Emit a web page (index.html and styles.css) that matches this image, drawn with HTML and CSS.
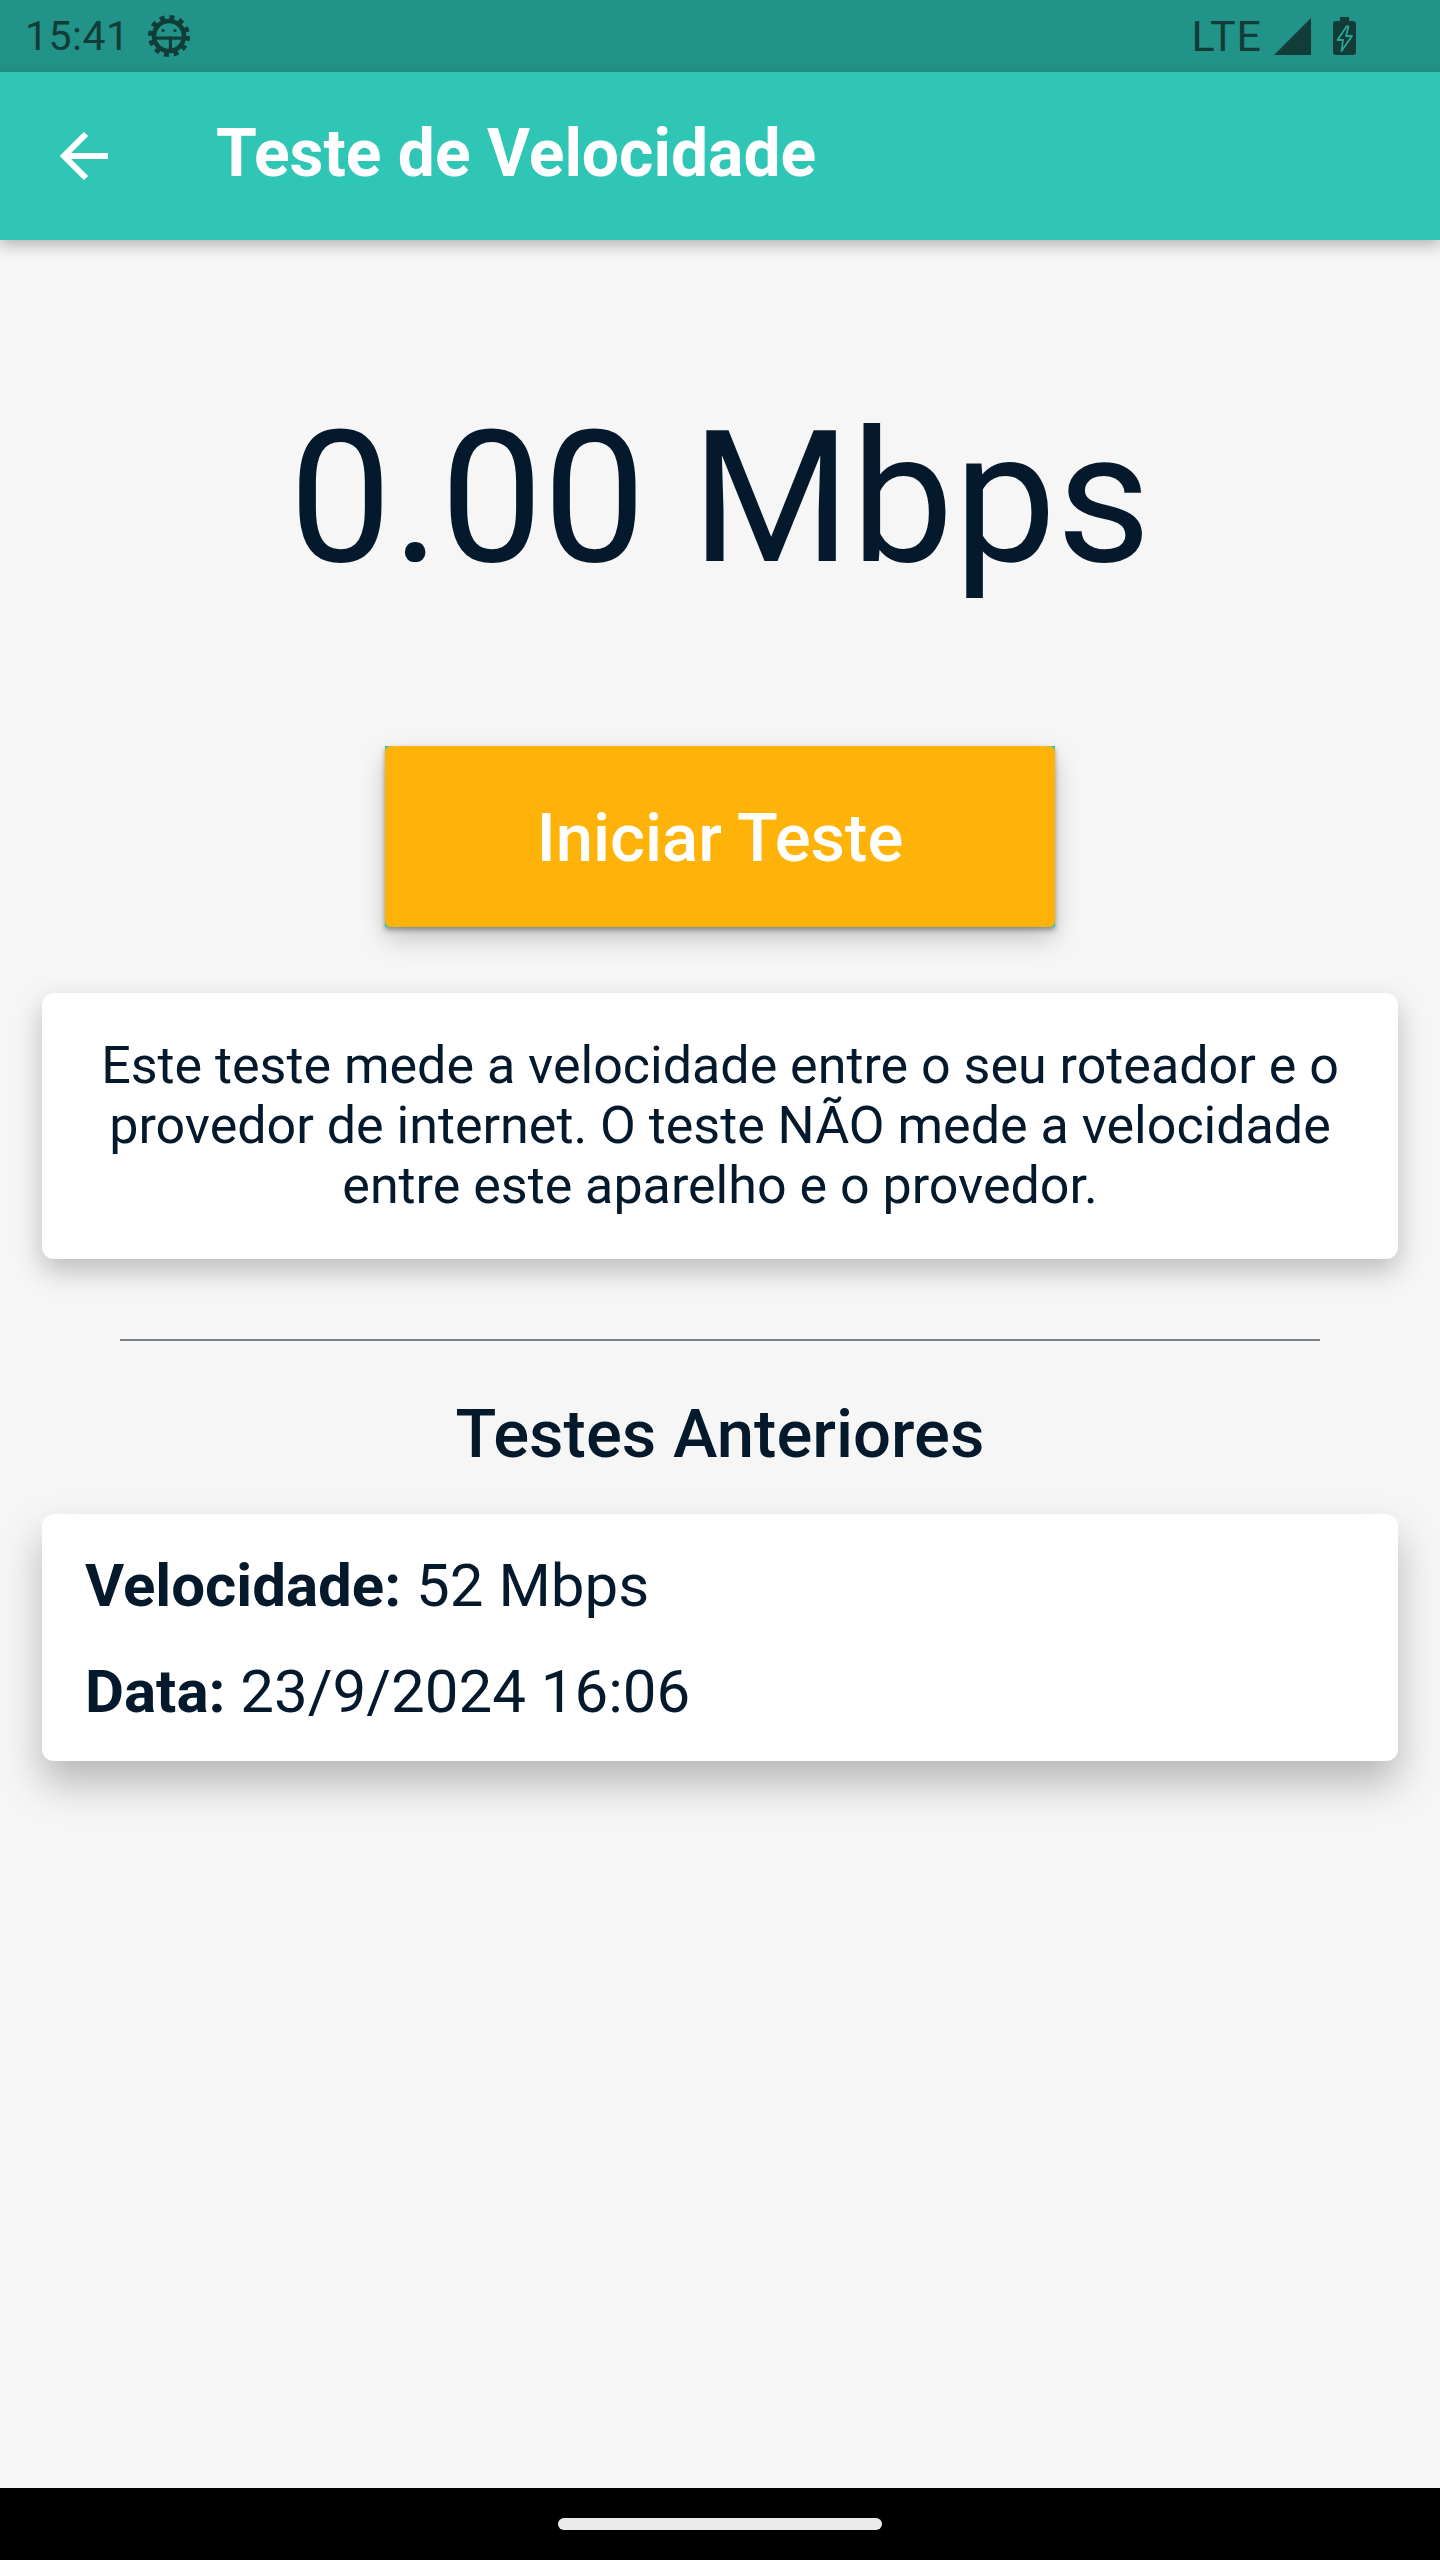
FILE: index.html
```html
<!DOCTYPE html>
<html lang="pt-BR">
<head>
    <meta charset="UTF-8">
    <meta name="viewport" content="width=device-width, initial-scale=1.0">
    <title>Teste de Velocidade</title>
    <link rel="stylesheet" href="styles.css">
</head>
<body>
    <div class="screen">
        <div class="status-bar">
            <div class="status-left">
                <span class="clock">15:41</span>
                <!-- debug gear -->
                <svg class="gear" viewBox="0 0 44 44">
                    <g fill="none" stroke="#123c38">
                        <circle cx="22" cy="22" r="18.500" stroke-width="5" stroke-dasharray="4.840 4.840"/>
                        <circle cx="22" cy="22" r="15" stroke-width="4.500"/>
                    </g>
                    <g fill="#123c38">
                        <rect x="8" y="22.500" width="28" height="3.200"/>
                        <rect x="21.800" y="22.500" width="3.200" height="14"/>
                        <circle cx="16" cy="16.500" r="1.600"/>
                        <circle cx="28" cy="16.500" r="1.600"/>
                    </g>
                </svg>
            </div>
            <div class="status-right">
                <span class="network">LTE</span>
                <svg class="signal" viewBox="0 0 37 37"><path d="M37 0v37H0z" fill="#123c38"/></svg>
                <svg class="battery" viewBox="0 0 23 38">
                    <path d="M7 0h9v4h4a3 3 0 0 1 3 3v28a3 3 0 0 1-3 3H3a3 3 0 0 1-3-3V7a3 3 0 0 1 3-3h4z" fill="#123c38"/>
                    <path d="M13.500 9.500L4.500 23h5.500L8.500 34 19 19h-6l2.500-9.500z" fill="#123c38" stroke="#2aa597" stroke-width="1.800" stroke-linejoin="round"/>
                </svg>
            </div>
        </div>

        <header class="app-bar">
            <svg class="back-icon" viewBox="0 0 48 48">
                <path d="M48 24H4M26 2L4 24l22 22" fill="none" stroke="#fff" stroke-width="6"/>
            </svg>
            <h1>Teste de Velocidade</h1>
        </header>

        <main class="content">
            <div class="speed">0.00 Mbps</div>
            <button class="start-btn"><span>Iniciar Teste</span></button>

            <div class="card info-card">
                Este teste mede a velocidade entre o seu roteador e o provedor de internet. O teste NÃO mede a velocidade entre este aparelho e o provedor.
            </div>

            <hr class="divider">
            <h2>Testes Anteriores</h2>

            <div class="card history-card">
                <p><b>Velocidade:</b> 52 Mbps</p>
                <p><b>Data:</b> 23/9/2024 16:06</p>
            </div>
        </main>

        <div class="nav-bar"><div class="home-pill"></div></div>
    </div>
</body>
</html>
```

FILE: styles.css
```css
* {
    margin: 0;
    padding: 0;
    box-sizing: border-box;
    font-family: 'Roboto', sans-serif;
}

body {
    background: #f6f6f6;
}

.screen {
    width: 1440px;
    height: 2560px;
    display: flex;
    flex-direction: column;
    overflow: hidden;
}

.status-bar {
    height: 72px;
    flex-shrink: 0;
    background: #219388;
    color: #123c38;
    display: flex;
    justify-content: space-between;
    align-items: center;
    padding: 0 84px 0 25px;
}

.status-left, .status-right {
    display: flex;
    align-items: center;
}

.clock {
    font-size: 41px;
    letter-spacing: 0.5px;
}

.gear {
    width: 44px;
    height: 44px;
    margin-left: 17px;
}

.network {
    font-size: 43px;
    letter-spacing: 1px;
}

.signal {
    width: 37px;
    height: 37px;
    margin-left: 12px;
}

.battery {
    width: 23px;
    height: 38px;
    margin-left: 22px;
}

.app-bar {
    height: 168px;
    flex-shrink: 0;
    background: #2fc6b6;
    display: flex;
    align-items: center;
    padding-left: 60px;
    position: relative;
    box-shadow: 0 6px 14px rgba(0,0,0,0.25);
}

.back-icon {
    width: 48px;
    height: 48px;
}

h1 {
    color: white;
    font-size: 66px;
    font-weight: 700;
    margin-left: 108px;
    padding-bottom: 6px;
}

.content {
    flex: 1;
    padding: 0 42px;
    display: flex;
    flex-direction: column;
    align-items: center;
    color: #04192b;
}

.speed {
    font-size: 183px;
    line-height: 206px;
    margin-top: 156px;
}

.start-btn {
    width: 670px;
    height: 181px;
    margin-top: 144px;
    border: none;
    background: #2fc6b6;
    box-shadow: 0 3px 5px rgba(0,0,0,0.35), 0 12px 24px rgba(0,0,0,0.2);
}

.start-btn span {
    display: flex;
    align-items: center;
    justify-content: center;
    height: 100%;
    background: #ffb308;
    border-radius: 6px;
    color: white;
    font-size: 67px;
    font-weight: 500;
    padding-top: 2px;
}

.card {
    width: 100%;
    background: white;
    border-radius: 12px;
}

.info-card {
    margin-top: 66px;
    height: 266px;
    padding: 43px 42px 0;
    font-size: 52px;
    line-height: 60px;
    text-align: center;
    box-shadow: 0 12px 28px rgba(0,0,0,0.24);
}

.divider {
    width: 1200px;
    height: 2px;
    border: none;
    background: #78828c;
    margin-top: 80px;
}

h2 {
    font-size: 67px;
    font-weight: 500;
    line-height: 74px;
    margin-top: 56px;
}

.history-card {
    margin-top: 43px;
    height: 247px;
    padding: 37px 43px;
    box-shadow: 0 22px 40px rgba(0,0,0,0.26);
}

.history-card p {
    font-size: 60px;
    line-height: 70px;
    margin-bottom: 36px;
}

.nav-bar {
    height: 72px;
    flex-shrink: 0;
    background: black;
    display: flex;
    justify-content: center;
    padding-top: 30px;
}

.home-pill {
    width: 324px;
    height: 12px;
    border-radius: 6px;
    background: #eaeaea;
}
```
